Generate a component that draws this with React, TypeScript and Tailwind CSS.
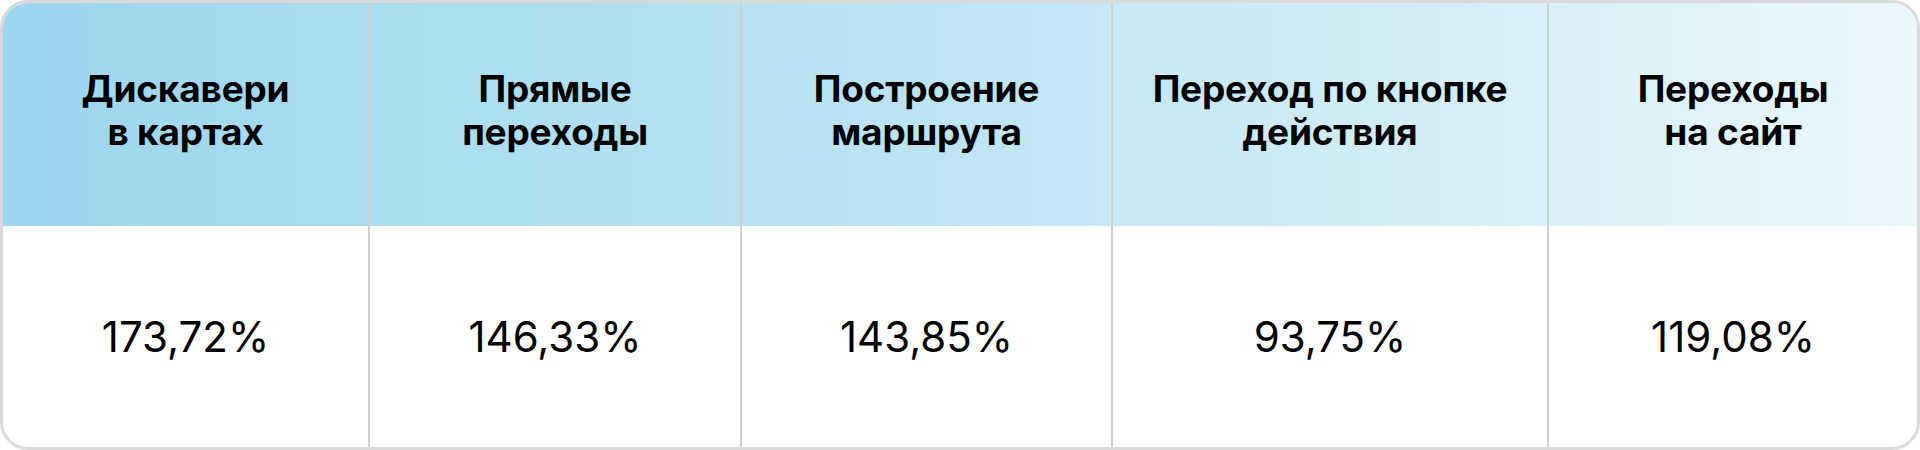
import React from 'react';

const columns = [
  { title: ['Дискавери', 'в картах'], value: '173,72%' },
  { title: ['Прямые', 'переходы'], value: '146,33%' },
  { title: ['Построение', 'маршрута'], value: '143,85%' },
  { title: ['Переход по кнопке', 'действия'], value: '93,75%' },
  { title: ['Переходы', 'на сайт'], value: '119,08%' },
];

const App = () => {
  return (
    <div className="w-[1920px] h-[450px] bg-white font-['Inter','Liberation_Sans',sans-serif] text-black">
      <div className="h-full rounded-[28px] border-[3px] border-[#d9d9d9] overflow-hidden flex flex-col">
        <div className="h-[223px] grid grid-cols-[365px_372px_371px_436px_1fr] bg-gradient-to-r from-[#9cd6ef] via-[#bde5f3] to-[#eaf7fc]">
          {columns.map((col, i) => (
            <div
              key={i}
              className={`flex flex-col items-center justify-center pb-[10px] text-[37px] font-bold leading-[43px] tracking-[-0.2px] ${i > 0 ? 'border-l-2 border-[#cfcfcf]' : ''}`}
            >
              {col.title.map((line, j) => (
                <span key={j}>{line}</span>
              ))}
            </div>
          ))}
        </div>
        <div className="flex-1 grid grid-cols-[365px_372px_371px_436px_1fr]">
          {columns.map((col, i) => (
            <div
              key={i}
              className={`flex items-center justify-center text-[42px] font-normal ${i > 0 ? 'border-l-2 border-[#cfcfcf]' : ''}`}
            >
              {col.value}
            </div>
          ))}
        </div>
      </div>
    </div>
  );
};

export default App;
